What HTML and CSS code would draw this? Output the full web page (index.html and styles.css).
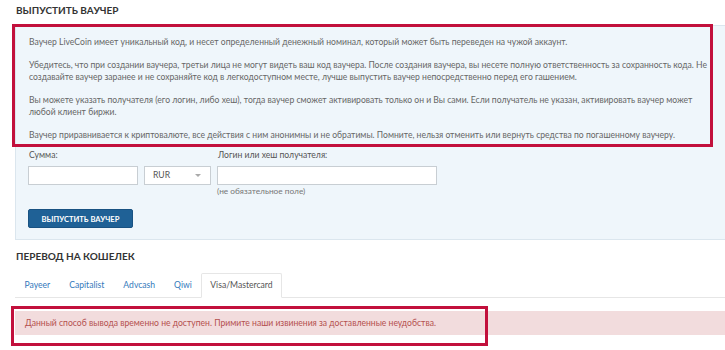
FILE: index.html
```html
<!DOCTYPE html>
<html lang="ru">
<head>
    <meta charset="UTF-8">
    <title>Выпустить ваучер</title>
    <link rel="stylesheet" href="styles.css">
</head>
<body>
    <div class="page">
        <h2 class="section-title">Выпустить ваучер</h2>
        <div class="panel">
            <div class="panel-info">
                <p>Ваучер LiveCoin имеет уникальный код, и несет определенный денежный номинал, который может быть переведен на чужой аккаунт.</p>
                <p>Убедитесь, что при создании ваучера, третьи лица не могут видеть ваш код ваучера. После создания ваучера, вы несете полную ответственность за сохранность кода. Не создавайте ваучер заранее и не сохраняйте код в легкодоступном месте, лучше выпустить ваучер непосредственно перед его гашением.</p>
                <p>Вы можете указать получателя (его логин, либо хеш), тогда ваучер сможет активировать только он и Вы сами. Если получатель не указан, активировать ваучер может любой клиент биржи.</p>
                <p>Ваучер приравнивается к криптовалюте, все действия с ним анонимны и не обратимы. Помните, нельзя отменить или вернуть средства по погашенному ваучеру.</p>
            </div>
            <div class="form-row">
                <div class="field">
                    <label>Сумма:</label>
                    <input type="text" class="input input-amount">
                </div>
                <div class="field">
                    <label>&nbsp;</label>
                    <div class="select">RUR <span class="caret"></span></div>
                </div>
                <div class="field">
                    <label>Логин или хеш получателя:</label>
                    <input type="text" class="input input-login">
                    <span class="hint">(не обязательное поле)</span>
                </div>
            </div>
            <button class="btn">Выпустить ваучер</button>
        </div>

        <h2 class="section-title second">Перевод на кошелек</h2>
        <ul class="tabs">
            <li>Payeer</li>
            <li>Capitalist</li>
            <li>Advcash</li>
            <li>Qiwi</li>
            <li class="active">Visa/Mastercard</li>
        </ul>
        <div class="alert">Данный способ вывода временно не доступен. Примите наши извинения за доставленные неудобства.</div>
    </div>

    <div class="mark mark-info"></div>
    <div class="mark mark-alert"></div>
</body>
</html>
```

FILE: styles.css
```css
body, html {
    margin: 0;
    padding: 0;
    overflow: hidden;
}
body {
    font-family: Lato, 'Open Sans', sans-serif;
    color: #555;
    background: #fff;
    width: 725px;
    height: 350px;
    position: relative;
}
.page {
    padding-left: 15px;
}
.section-title {
    margin: 0;
    padding: 4px 0 0 1px;
    height: 21px;
    font-size: 10px;
    line-height: 12px;
    font-weight: 700;
    text-transform: uppercase;
    color: #333;
}
.section-title.second {
    padding: 10px 0 11px 1px;
    height: 12px;
}
.panel {
    background: #eff6fb;
    border: 1px solid #dbe6ee;
    border-right: none;
    height: 215px;
    margin-right: -10px;
    box-sizing: border-box;
    padding: 0 0 0 12px;
}
.panel-info {
    box-sizing: border-box;
    padding: 10px 0 0 1px;
    height: 123px;
    width: 690px;
    font-size: 8.6px;
    line-height: 12px;
    color: #666;
}
.panel-info p {
    margin: 0 0 11px 0;
}
.form-row {
    display: flex;
    gap: 6px;
}
.field {
    display: flex;
    flex-direction: column;
}
.field label {
    font-size: 8.6px;
    color: #555;
    line-height: 12px;
    margin-bottom: 5px;
    padding-left: 1px;
}
.input, .select {
    height: 19px;
    box-sizing: border-box;
    border: 1px solid #c8ced3;
    background: #fff;
    margin: 0;
    padding: 0;
}
.input-amount {
    width: 110px;
}
.input-login {
    width: 220px;
}
.select {
    width: 67px;
    font-size: 8.6px;
    line-height: 17px;
    padding-left: 8px;
    color: #555;
    position: relative;
}
.caret {
    position: absolute;
    right: 9px;
    top: 7px;
    border-left: 3px solid transparent;
    border-right: 3px solid transparent;
    border-top: 3px solid #aaa;
}
.hint {
    font-size: 8.3px;
    line-height: 11px;
    color: #777;
    margin-top: 1px;
}
.btn {
    display: block;
    margin-top: 12px;
    width: 105px;
    height: 19px;
    background: #1f6196;
    border: 1px solid #195282;
    border-radius: 2px;
    color: #fff;
    font-family: Lato, sans-serif;
    font-weight: 700;
    font-size: 7.6px;
    text-transform: uppercase;
    padding: 0;
}
.tabs {
    list-style: none;
    margin: 0;
    padding: 0;
    display: flex;
    border-bottom: 1px solid #e6e6e6;
    height: 24px;
    margin-right: -10px;
}
.tabs li {
    padding: 0 9.5px;
    font-size: 8.6px;
    line-height: 24px;
    color: #3479bb;
}
.tabs li.active {
    color: #555;
    background: #fff;
    border: 1px solid #e6e6e6;
    border-bottom-color: #fff;
    border-radius: 2px 2px 0 0;
    margin-bottom: -1px;
    line-height: 23px;
    padding: 0 8px;
}
.alert {
    margin-top: 13px;
    background: #f2dcdd;
    color: #b4504e;
    font-size: 8.6px;
    height: 24px;
    line-height: 24px;
    padding-left: 10px;
    margin-right: -10px;
}
.mark {
    position: absolute;
    border: 3px solid #c2103c;
    box-sizing: border-box;
}
.mark-info {
    left: 12px;
    top: 24px;
    width: 701px;
    height: 123px;
}
.mark-alert {
    left: 11px;
    top: 306px;
    width: 477px;
    height: 40px;
}
```
